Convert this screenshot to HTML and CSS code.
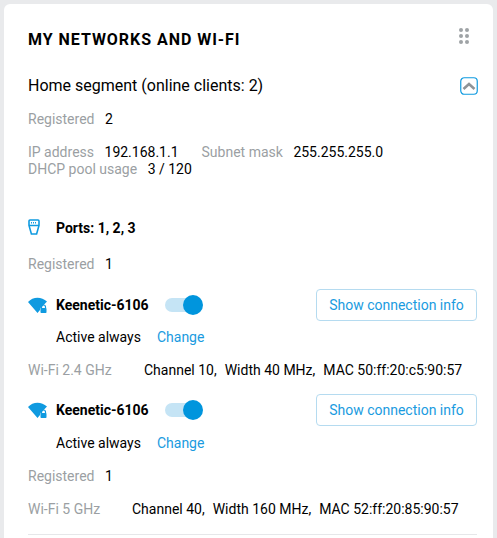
FILE: index.html
```html
<!DOCTYPE html>
<html lang="en">
<head>
<meta charset="utf-8">
<title>My networks and Wi-Fi</title>
<link rel="stylesheet" href="styles.css">
</head>
<body>
<main class="card">
  <header class="card-head">
    <h1 class="title">MY NETWORKS AND WI-FI</h1>
    <svg class="grip" width="10" height="16" viewBox="0 0 10 16"><g fill="#9fa3a6"><circle cx="2" cy="2" r="2"/><circle cx="8" cy="2" r="2"/><circle cx="2" cy="8" r="2"/><circle cx="8" cy="8" r="2"/><circle cx="2" cy="14" r="2"/><circle cx="8" cy="14" r="2"/></g></svg>
  </header>
  <div class="segment-head">
    <h2 class="segment">Home segment (online clients: 2)</h2>
    <button class="collapse" type="button" aria-label="Collapse">
      <svg width="18" height="18" viewBox="0 0 18 18"><rect x="0.75" y="0.75" width="16.5" height="16.5" rx="3.5" fill="none" stroke="#0f9ae0" stroke-width="1.2"/><path d="M3.5 12 9 7l5.5 5" fill="none" stroke="#8f9498" stroke-width="2.6"/></svg>
    </button>
  </div>
  <div class="row reg-1"><span class="label">Registered</span><span class="value">2</span></div>
  <div class="info">
    <div class="info-line"><span class="label">IP address</span><span class="value">192.168.1.1</span><span class="label mask">Subnet mask</span><span class="value">255.255.255.0</span></div>
    <div class="info-line"><span class="label">DHCP pool usage</span><span class="value">3 / 120</span></div>
  </div>
  <div class="ports">
    <svg class="port-icon" width="12" height="16" viewBox="0 0 12 16"><path d="M2 1h8a1 1 0 0 1 1 1v4.500L8.600 15H3.400L1 6.500V2a1 1 0 0 1 1-1Z" fill="none" stroke="#0f9ae0" stroke-width="1.600"/><path d="M1 6.500h10" stroke="#0f9ae0" stroke-width="1.500"/><path d="M3 3.800h6" stroke="#0f9ae0" stroke-width="1.500" stroke-dasharray="1 1"/></svg>
    <strong class="name">Ports: 1, 2, 3</strong>
  </div>
  <div class="row reg-2"><span class="label">Registered</span><span class="value">1</span></div>

  <div class="wifi-head first">
    <div class="wifi-left">
      <svg class="wifi-icon" width="19" height="17" viewBox="0 0 19 17"><path d="M0 5C5 -.6 13.500 -.6 19 4.600L14.200 9.500a4 4 0 0 0-2.200 3.500L9.500 16Z" fill="#0f9ae0"/><path d="M13.500 11V10a2 2 0 0 1 4 0v1" fill="none" stroke="#0f9ae0" stroke-width="1.200"/><rect x="12.500" y="11" width="6" height="5" rx=".8" fill="#0f9ae0"/></svg>
      <strong class="name">Keenetic-6106</strong>
      <span class="toggle"><span class="knob"></span></span>
    </div>
    <button class="info-btn" type="button">Show connection info</button>
  </div>
  <div class="schedule"><span>Active always</span><a class="link" href="#">Change</a></div>
  <div class="row band"><span class="label band-24">Wi-Fi 2.4 GHz</span><span class="specs"><span>Channel 10,</span><span>Width 40 MHz,</span><span>MAC 50:ff:20:c5:90:57</span></span></div>

  <div class="wifi-head second">
    <div class="wifi-left">
      <svg class="wifi-icon" width="19" height="17" viewBox="0 0 19 17"><path d="M0 5C5 -.6 13.500 -.6 19 4.600L14.200 9.500a4 4 0 0 0-2.200 3.500L9.500 16Z" fill="#0f9ae0"/><path d="M13.500 11V10a2 2 0 0 1 4 0v1" fill="none" stroke="#0f9ae0" stroke-width="1.200"/><rect x="12.500" y="11" width="6" height="5" rx=".8" fill="#0f9ae0"/></svg>
      <strong class="name">Keenetic-6106</strong>
      <span class="toggle"><span class="knob"></span></span>
    </div>
    <button class="info-btn" type="button">Show connection info</button>
  </div>
  <div class="schedule schedule-last"><span>Active always</span><a class="link" href="#">Change</a></div>
  <div class="row reg-3"><span class="label">Registered</span><span class="value">1</span></div>
  <div class="row band"><span class="label band-5">Wi-Fi 5 GHz</span><span class="specs"><span>Channel 40,</span><span>Width 160 MHz,</span><span>MAC 52:ff:20:85:90:57</span></span></div>
  <hr class="divider">
</main>
</body>
</html>
```
FILE: styles.css
```css
* { box-sizing: border-box; }
html, body { margin: 0; height: 538px; overflow: hidden; }
body {
  background: #e9eaec;
  padding: 4px 4px 0;
  font: 14px/17px Roboto, sans-serif;
  color: #000;
}
.card {
  background: #fff;
  border-radius: 6px 6px 0 0;
  height: 534px;
  padding: 0 16px 0 24px;
  overflow: hidden;
}
.card-head {
  display: flex;
  justify-content: space-between;
  align-items: flex-start;
  padding-top: 24px;
  height: 65px;
}
.title {
  margin: 0;
  font-size: 16px;
  line-height: 24px;
  font-weight: 700;
  letter-spacing: .96px;
}
.grip { margin: 0 8px 0 0; }
.segment-head {
  display: flex;
  justify-content: space-between;
  align-items: center;
  height: 34px;
}
.segment { margin: 0; font-size: 16px; line-height: 34px; font-weight: 400; }
.collapse { border: 0; background: none; padding: 0; margin-right: -1px; width: 18px; height: 18px; display: block; }
.collapse svg { display: block; }
.row { display: flex; }
.label { color: #9b9fa3; margin-right: 10.5px; }
.value { color: #000; }
.reg-1 { margin-top: 8px; height: 17px; }
.info { margin-top: 16px; }
.mask { margin-left: 23px; }
.info-line { display: flex; height: 17px; }
.ports { display: flex; align-items: center; margin-top: 38px; height: 24px; }
.port-icon { margin-right: 16px; margin-top: -3px; }
.name { font-weight: 700; }
.reg-2 { margin-top: 16px; height: 17px; }
.wifi-head { display: flex; justify-content: space-between; align-items: center; height: 32px; }
.wifi-head.first { margin-top: 16px; }
.wifi-head.second { margin-top: 15px; }
.wifi-left { display: flex; align-items: center; }
.wifi-icon { margin-right: 9px; }
.toggle {
  position: relative;
  width: 37px;
  height: 14px;
  border-radius: 7px;
  background: #c5e4f5;
  margin-left: 16px;
}
.knob {
  position: absolute;
  right: -1px;
  top: -3px;
  width: 20px;
  height: 20px;
  border-radius: 50%;
  background: #0095dd;
}
.info-btn {
  width: 161px;
  height: 32px;
  padding: 0;
  background: #fff;
  border: 1px solid #b5dbf0;
  border-radius: 4px;
  color: #1a9be0;
  font: 14px Roboto, sans-serif;
}
.schedule { display: flex; padding-left: 28px; margin-top: 8px; height: 17px; }
.schedule-last { margin-top: 9px; }
.link { color: #1a9be0; text-decoration: none; margin-left: 16px; }
.band { margin-top: 16px; height: 17px; }
.band-24 { width: 116px; margin: 0; }
.band-5 { width: 104px; margin: 0; }
.specs { display: flex; gap: 8px; }
.reg-3 { margin-top: 16px; height: 17px; }
.divider { border: 0; border-top: 1px solid #e6e7e9; margin: 16px 0 0 0; }
```
